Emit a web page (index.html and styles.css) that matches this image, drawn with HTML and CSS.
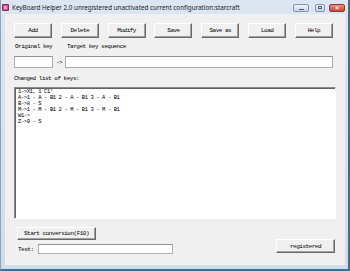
FILE: index.html
```html
<!DOCTYPE html>
<html lang="en">

<head>
	<meta charset="UTF-8">
	<title>KeyBoard Helper</title>
	<link rel="stylesheet" href="styles.css">
</head>

<body>
	<div class="window">
		<div class="titlebar">
			<svg class="app-icon" width="7" height="7" viewBox="0 0 7 7">
				<rect x="0" y="0" width="7" height="7" rx="1" fill="#8a2a5a" />
				<rect x="1" y="1" width="5" height="5" fill="#d0508a" />
				<rect x="2" y="2" width="3" height="3" fill="#f2a0c0" />
			</svg>
			<span class="title">KeyBoard Helper 2.0 unregistered unactivated current configuration:starcraft</span>
			<div class="caption">
				<span class="cap cap-min"></span>
				<span class="cap cap-max"></span>
				<span class="cap cap-close">&#x2715;</span>
			</div>
		</div>
		<div class="client">
			<div class="toolbar">
				<button type="button" class="btn">Add</button>
				<button type="button" class="btn">Delete</button>
				<button type="button" class="btn">Modify</button>
				<button type="button" class="btn">Save</button>
				<button type="button" class="btn">Save as</button>
				<button type="button" class="btn">Load</button>
				<button type="button" class="btn">Help</button>
			</div>
			<div class="labels">
				<span class="label-orig">Original key</span>
				<span>Target key sequence</span>
			</div>
			<div class="key-row">
				<div class="field field-orig"></div>
				<span class="arrow">-&gt;</span>
				<div class="field field-target"></div>
			</div>
			<div class="list-label">Changed list of keys:</div>
			<div class="list">1-&gt;X1, 1 C1'
A-&gt;1 - A - B1 2 - A - B1 3 - A - B1
B-&gt;8 - S
M-&gt;1 - M - B1 2 - M - B1 3 - M - B1
W1-&gt;
Z-&gt;9 - S</div>
			<div class="bottom">
				<div class="bottom-left">
					<button type="button" class="btn btn-start">Start conversion(F10)</button>
					<div class="test-row">
						<span class="test-label">Test:</span>
						<div class="field field-test"></div>
					</div>
				</div>
				<button type="button" class="btn btn-reg">registered</button>
			</div>
		</div>
	</div>
</body>

</html>
```

FILE: styles.css
```css
*,
*::before,
*::after {
	box-sizing: border-box;
}

body {
	margin: 0;
	width: 350px;
	height: 271px;
	overflow: hidden;
	background-color: #ffffff;
}

.window {
	width: 350px;
	height: 271px;
	display: flex;
	flex-direction: column;
	padding: 0 3px 4px 4px;
	background: linear-gradient(#dbe6f2, #cfdcea);
	border-left: 1px solid #8fa3b6;
	border-right: 2px solid #3f6f8d;
	border-bottom: 2px solid #3f6f8d;
}

.titlebar {
	height: 14px;
	display: flex;
	align-items: center;
	margin-left: -3px;
}

.app-icon {
	flex: none;
	margin: 1px 3px 0 0;
}

.title {
	font-family: "Noto Sans", sans-serif;
	font-size: 6.3px;
	color: #1a1a1a;
	white-space: nowrap;
	flex: 1;
	padding-top: 1px;
}

.caption {
	display: flex;
	align-items: center;
	gap: 4px;
	margin-top: 1px;
}

.cap {
	height: 8px;
	border: 1px solid #7c93ad;
	border-radius: 2px;
	background: linear-gradient(#eef3f9, #c8d6e6);
	position: relative;
}

.cap-min {
	width: 16px;
}

.cap-min::after {
	content: '';
	position: absolute;
	left: 5px;
	top: 4px;
	width: 5px;
	height: 1px;
	background-color: #4a5f78;
}

.cap-max {
	width: 10px;
	margin-left: 2px;
}

.cap-max::after {
	content: '';
	position: absolute;
	left: 2px;
	top: 1px;
	width: 4px;
	height: 3px;
	border: 1px solid #4a5f78;
}

.cap-close {
	width: 16px;
	border-color: #8e3a32;
	background: linear-gradient(#e4907e, #c5473a);
	color: #ffffff;
	font-size: 6px;
	line-height: 6px;
	text-align: center;
	font-family: "DejaVu Sans", sans-serif;
	font-weight: bold;
}

.client {
	flex: 1;
	background-color: #f0f0f0;
	padding: 9px 0 0 9px;
	font-family: "Liberation Mono", monospace;
	font-size: 6px;
	letter-spacing: -0.5px;
	color: #000000;
}

.btn {
	font-family: "Liberation Mono", monospace;
	font-size: 6px;
	letter-spacing: -0.5px;
	color: #000000;
	background-color: #f0f0f0;
	border: 1px solid;
	border-color: #ffffff #696969 #696969 #ffffff;
	box-shadow: inset -1px -1px 0 #a0a0a0;
	padding: 0;
	margin: 0;
}

.toolbar {
	width: 319px;
	height: 15px;
	display: flex;
	justify-content: space-between;
}

.toolbar .btn {
	width: 38px;
	height: 15px;
}

.labels {
	margin-top: 5px;
	height: 8px;
	line-height: 8px;
	display: flex;
	padding-left: 1px;
}

.label-orig {
	width: 52px;
}

.key-row {
	margin-top: 5px;
	height: 12px;
	display: flex;
	align-items: center;
}

.field {
	background-color: #ffffff;
	border: 1px solid #abadb3;
	border-top-color: #8f9298;
}

.field-orig {
	width: 39px;
	height: 12px;
}

.arrow {
	width: 12px;
	padding-left: 3px;
}

.field-target {
	width: 268px;
	height: 12px;
}

.list-label {
	margin-top: 7px;
	height: 8px;
	line-height: 8px;
}

.list {
	margin-top: 4px;
	width: 322px;
	height: 132px;
	background-color: #ffffff;
	border: 1px solid;
	border-color: #8a8a8a #ffffff #ffffff #8a8a8a;
	box-shadow: inset 1px 1px 0 #646464;
	padding: 1px 3px;
	white-space: pre;
	font-size: 5.5px;
	line-height: 6px;
	letter-spacing: -0.4px;
}

.bottom {
	margin-top: 8px;
	display: flex;
	justify-content: space-between;
	padding-left: 3px;
	padding-right: 10px;
}

.btn-start {
	width: 79px;
	height: 13px;
}

.test-row {
	margin-top: 4px;
	height: 10px;
	display: flex;
	align-items: center;
	padding-left: 1px;
}

.test-label {
	width: 20px;
}

.field-test {
	width: 135px;
	height: 10px;
}

.btn-reg {
	width: 59px;
	height: 14px;
	margin-top: 12px;
}
```
